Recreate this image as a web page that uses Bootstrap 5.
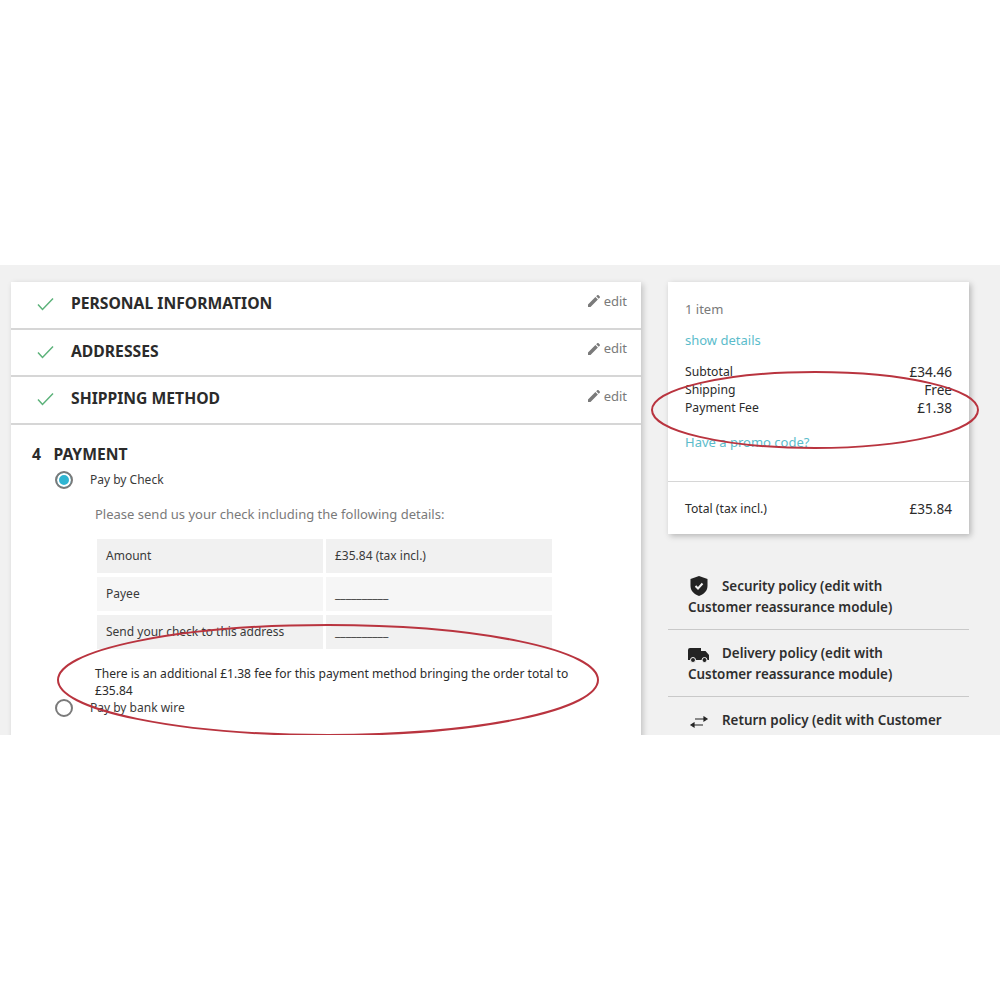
<!DOCTYPE html>
<html lang="en">
<head>
    <meta charset="UTF-8">
    <meta name="viewport" content="width=device-width, initial-scale=1.0">
    <title>Payment fee</title>
    <link href="https://cdn.jsdelivr.net/npm/bootstrap@5.3.0/dist/css/bootstrap.min.css" rel="stylesheet">
    <style>
        html, body {
            height: 1000px;
            overflow: hidden;
        }

        body {
            background: #fff;
            font-family: "Noto Sans", "Open Sans", sans-serif;
            color: #2b2b2b;
            font-size: 12px;
        }

        .shot-band {
            margin-top: 265px;
            height: 470px;
            background: #f1f1f1;
            padding: 17px 31px 0 11px;
            overflow: hidden;
            position: relative;
            gap: 27px;
        }

        .main-col {
            width: 630px;
            flex: none;
        }

        .side-col {
            width: 301px;
            flex: none;
        }

        .step-box {
            background: #fff;
            box-shadow: 2px 2px 6px rgba(0, 0, 0, .2);
        }

        .step-row {
            height: 47.5px;
            border-bottom: 2px solid #d6d6d6;
            padding: 3px 14px 4px 26px;
        }

        .step-title {
            font-size: 15.7px;
            font-weight: 700;
            margin-left: 17px;
        }

        .edit-link {
            color: #7a7a7a;
            font-size: 13px;
            margin-top: -6px;
        }

        .pay-body {
            padding: 18px 20px 0 21px;
            height: 400px;
        }

        .pay-title {
            font-size: 15.7px;
            font-weight: 700;
            line-height: 22px;
        }

        .pay-num {
            width: 21.5px;
        }

        .radio-row {
            height: 20px;
            margin-left: 23px;
            gap: 17px;
            color: #3a3a3a;
        }

        .radio-dot {
            width: 18px;
            height: 18px;
            border: 2px solid #7a7a7a;
            border-radius: 50%;
            flex: none;
        }

        .radio-on {
            background: #2fb5d2;
            box-shadow: inset 0 0 0 2px #fff;
        }

        .radio-first {
            margin-top: 5px;
        }

        .radio-low {
            margin-top: -1px;
        }

        .pay-info {
            margin-left: 63px;
            width: 490px;
        }

        .pay-lead {
            font-size: 13px;
            color: #7a7a7a;
            line-height: 20px;
            margin: 14px 0 15px;
        }

        .check-grid {
            display: grid;
            grid-template-columns: 226px 226px;
            grid-auto-rows: 34px;
            gap: 4px 3px;
            margin-left: 2px;
        }

        .check-cell {
            background: #f1f1f1;
            padding: 0 9px;
            display: flex;
            align-items: center;
            color: #3a3a3a;
        }

        .check-grid .check-cell:nth-child(3), .check-grid .check-cell:nth-child(4) {
            background: #f6f6f6;
        }

        .fee-note {
            font-size: 12.08px;
            line-height: 17px;
            margin: 16px 0 0;
        }

        .sum-box {
            background: #fff;
            height: 252px;
            box-shadow: 2px 2px 6px rgba(0, 0, 0, .25);
        }

        .sum-top {
            height: 200px;
            padding: 17px 17px 0;
            border-bottom: 1px solid #d6d6d6;
        }

        .sum-muted {
            color: #7a7a7a;
            font-size: 13px;
            line-height: 20px;
            margin-bottom: 11px;
        }

        .sum-link {
            color: #5bbccb;
            font-size: 13px;
            line-height: 20px;
        }

        .sum-lines {
            margin: 13px 0 15px;
            font-size: 12.2px;
        }

        .sum-line {
            height: 18px;
            line-height: 18px;
        }

        .sum-price {
            font-size: 13.6px;
        }

        .sum-total {
            height: 51px;
            padding: 3px 17px 0;
            font-size: 12.2px;
        }

        .policy-list {
            padding-top: 42px;
        }

        .policy-item {
            border-bottom: 1px solid #c9c9c9;
            padding: 0 24px 0 20px;
            margin-bottom: 13px;
            height: 54px;
            font-size: 13.4px;
            font-weight: 600;
            line-height: 21px;
            color: #2e2e2e;
        }

        .policy-item svg {
            margin: -5px 12px -5px 0;
            vertical-align: 0;
        }

        .ring-overlay {
            position: absolute;
            left: 0;
            top: 0;
            pointer-events: none;
        }
    </style>
</head>

<body>
    <div class="shot-band d-flex">
        <!-- Checkout steps -->
        <div class="main-col">
            <div class="step-box">
                <div class="step-row d-flex align-items-center">
                    <svg width="17" height="14" viewBox="0 0 17 14"><path d="M1 7.500 5.500 12.500 16 1.500" fill="none" stroke="#5cb27a" stroke-width="1.5"/></svg>
                    <span class="step-title">PERSONAL INFORMATION</span>
                    <span class="edit-link ms-auto d-flex align-items-center gap-1">
                        <svg width="12" height="12" viewBox="0 0 12 12"><path d="M0 12V9.500L7.400 2.100 9.900 4.600 2.500 12ZM8.200 1.300 9.200.3a1 1 0 0 1 1.400 0l1.100 1.100a1 1 0 0 1 0 1.400l-1 1Z" fill="#7a7a7a"/></svg>
                        edit
                    </span>
                </div>
                <div class="step-row d-flex align-items-center">
                    <svg width="17" height="14" viewBox="0 0 17 14"><path d="M1 7.500 5.500 12.500 16 1.500" fill="none" stroke="#5cb27a" stroke-width="1.5"/></svg>
                    <span class="step-title">ADDRESSES</span>
                    <span class="edit-link ms-auto d-flex align-items-center gap-1">
                        <svg width="12" height="12" viewBox="0 0 12 12"><path d="M0 12V9.500L7.400 2.100 9.900 4.600 2.500 12ZM8.200 1.300 9.200.3a1 1 0 0 1 1.400 0l1.100 1.100a1 1 0 0 1 0 1.400l-1 1Z" fill="#7a7a7a"/></svg>
                        edit
                    </span>
                </div>
                <div class="step-row d-flex align-items-center">
                    <svg width="17" height="14" viewBox="0 0 17 14"><path d="M1 7.500 5.500 12.500 16 1.500" fill="none" stroke="#5cb27a" stroke-width="1.5"/></svg>
                    <span class="step-title">SHIPPING METHOD</span>
                    <span class="edit-link ms-auto d-flex align-items-center gap-1">
                        <svg width="12" height="12" viewBox="0 0 12 12"><path d="M0 12V9.500L7.400 2.100 9.900 4.600 2.500 12ZM8.200 1.300 9.200.3a1 1 0 0 1 1.400 0l1.100 1.100a1 1 0 0 1 0 1.400l-1 1Z" fill="#7a7a7a"/></svg>
                        edit
                    </span>
                </div>

                <div class="pay-body">
                    <div class="pay-title d-flex"><span class="pay-num">4</span>PAYMENT</div>
                    <div class="radio-row radio-first d-flex align-items-center">
                        <span class="radio-dot radio-on"></span>
                        <span>Pay by Check</span>
                    </div>
                    <div class="pay-info">
                        <p class="pay-lead">Please send us your check including the following details:</p>
                        <div class="check-grid">
                            <div class="check-cell">Amount</div>
                            <div class="check-cell">£35.84 (tax incl.)</div>
                            <div class="check-cell">Payee</div>
                            <div class="check-cell">__________</div>
                            <div class="check-cell">Send your check to this address</div>
                            <div class="check-cell">__________</div>
                        </div>
                        <p class="fee-note">There is an additional £1.38 fee for this payment method bringing the order total to £35.84</p>
                    </div>
                    <div class="radio-row radio-low d-flex align-items-center">
                        <span class="radio-dot"></span>
                        <span>Pay by bank wire</span>
                    </div>
                </div>
            </div>
        </div>

        <!-- Order summary -->
        <div class="side-col">
            <div class="sum-box">
                <div class="sum-top">
                    <div class="sum-muted">1 item</div>
                    <div class="sum-link">show details</div>
                    <div class="sum-lines">
                        <div class="sum-line d-flex justify-content-between"><span>Subtotal</span><span class="sum-price">£34.46</span></div>
                        <div class="sum-line d-flex justify-content-between"><span>Shipping</span><span class="sum-price">Free</span></div>
                        <div class="sum-line d-flex justify-content-between"><span>Payment Fee</span><span class="sum-price">£1.38</span></div>
                    </div>
                    <div class="sum-link">Have a promo code?</div>
                </div>
                <div class="sum-total d-flex justify-content-between align-items-center"><span>Total (tax incl.)</span><span class="sum-price">£35.84</span></div>
            </div>

            <div class="policy-list">
                <div class="policy-item">
                    <svg width="22" height="20" viewBox="0 0 22 20"><path d="M11 0 19.500 3V10C19.500 15 15.500 18.500 11 20 6.500 18.500 2.500 15 2.500 10V3Z" fill="#232323"/><path d="M7.500 10 10 12.500 14.500 7.500" fill="none" stroke="#f1f1f1" stroke-width="2"/></svg>Security policy (edit with Customer reassurance module)
                </div>
                <div class="policy-item">
                    <svg width="22" height="16" viewBox="0 0 22 16"><path d="M0 3a2 2 0 0 1 2-2H13V4H17.500L21 8V13H0Z" fill="#232323"/><circle cx="5" cy="13" r="2.500" fill="#232323" stroke="#f1f1f1"/><circle cx="16.500" cy="13" r="2.500" fill="#232323" stroke="#f1f1f1"/></svg>Delivery policy (edit with Customer reassurance module)
                </div>
                <div class="policy-item">
                    <svg width="22" height="16" viewBox="0 0 22 16"><path d="M7 5H16M16 3 19 5 16 7ZM6 11H15M6 9 3 11 6 13Z" fill="#232323" stroke="#232323" stroke-width="1.2"/></svg>Return policy (edit with Customer
                </div>
            </div>
        </div>

        <!-- Red marker rings -->
        <svg class="ring-overlay" width="1000" height="470" viewBox="0 265 1000 470">
            <ellipse cx="328" cy="680" rx="270" ry="55" fill="none" stroke="#b9343f" stroke-width="2"/>
            <ellipse cx="815" cy="410" rx="163" ry="38" fill="none" stroke="#b9343f" stroke-width="2"/>
        </svg>
    </div>

    <script src="https://cdn.jsdelivr.net/npm/bootstrap@5.3.0/dist/js/bootstrap.bundle.min.js"></script>
</body>

</html>
